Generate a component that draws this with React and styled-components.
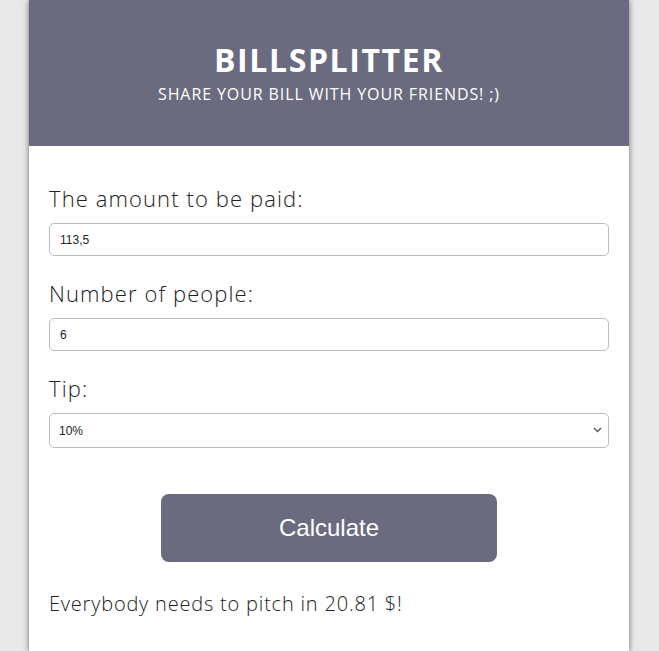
import styled, { createGlobalStyle } from "styled-components";

const Global = createGlobalStyle`
  html, body {
    margin: 0;
    padding: 0;
    background: #e9e9e9;
  }
  body {
    font-family: "Open Sans", "Liberation Sans", sans-serif;
  }
`;

const Page = styled.div`
  display: flex;
  justify-content: center;
  padding-left: 29px;
  width: 600px;
`;

const Card = styled.div`
  width: 600px;
  min-height: 651px;
  background: #fff;
  box-shadow: 0 0 6px rgba(0, 0, 0, 0.55);
`;

const Header = styled.header`
  height: 146px;
  box-sizing: border-box;
  padding-top: 40px;
  background: #6b6b80;
  color: #fff;
  text-align: center;

  h1 {
    margin: 0;
    font-size: 32px;
    font-weight: 700;
    line-height: 40px;
    letter-spacing: 1.6px;
  }

  p {
    margin: 3px 0 0;
    font-size: 16px;
    font-weight: 400;
    letter-spacing: 0.9px;
    text-transform: uppercase;
  }
`;

const Form = styled.form`
  display: flex;
  flex-direction: column;
  padding: 38px 20px 0;
`;

const Label = styled.label`
  font-size: 22px;
  font-weight: 300;
  color: #222;
  line-height: 28px;
  letter-spacing: 1.1px;
  margin-bottom: 11px;
`;

const Field = styled.input`
  box-sizing: border-box;
  height: 33px;
  padding: 0 10px;
  border: 1px solid #bdbdbd;
  border-radius: 5px;
  color: #222;
  font-family: "Liberation Sans", Arial, sans-serif;
  font-size: 12px;
  margin-bottom: 23px;
`;

const SelectWrap = styled.div`
  position: relative;
  display: flex;

  svg {
    position: absolute;
    right: 7px;
    top: 14px;
    pointer-events: none;
  }
`;

const Select = styled.select`
  flex: 1;
  box-sizing: border-box;
  height: 35px;
  padding: 0 9px;
  border: 1px solid #bdbdbd;
  border-radius: 5px;
  background: #fff;
  color: #222;
  appearance: none;
  font-family: "Liberation Sans", Arial, sans-serif;
  font-size: 12px;
`;

const Button = styled.button`
  align-self: center;
  margin-top: 46px;
  width: 336px;
  height: 68px;
  border: none;
  border-radius: 8px;
  background: #6b6b80;
  color: #fff;
  font-family: "Liberation Sans", Arial, sans-serif;
  font-size: 24px;
`;

const Result = styled.p`
  margin: 28px 0 0;
  font-size: 20px;
  font-weight: 300;
  letter-spacing: 0.8px;
  color: #222;
`;

export default function App() {
  return (
    <>
      <Global />
      <Page>
        <Card>
          <Header>
            <h1>BILLSPLITTER</h1>
            <p>Share your bill with your friends! ;)</p>
          </Header>
          <Form onSubmit={(e) => e.preventDefault()}>
            <Label htmlFor="amount">The amount to be paid:</Label>
            <Field id="amount" defaultValue="113,5" />
            <Label htmlFor="people">Number of people:</Label>
            <Field id="people" defaultValue="6" />
            <Label htmlFor="tip">Tip:</Label>
            <SelectWrap>
              <Select id="tip" defaultValue="10">
                <option value="0">0%</option>
                <option value="5">5%</option>
                <option value="10">10%</option>
                <option value="15">15%</option>
                <option value="20">20%</option>
              </Select>
              <svg width="9" height="6" viewBox="0 0 9 6">
                <path d="M1 1l3.5 3.5L8 1" fill="none" stroke="#555" strokeWidth="1.4" />
              </svg>
            </SelectWrap>
            <Button type="submit">Calculate</Button>
            <Result>Everybody needs to pitch in 20.81 $!</Result>
          </Form>
        </Card>
      </Page>
    </>
  );
}
